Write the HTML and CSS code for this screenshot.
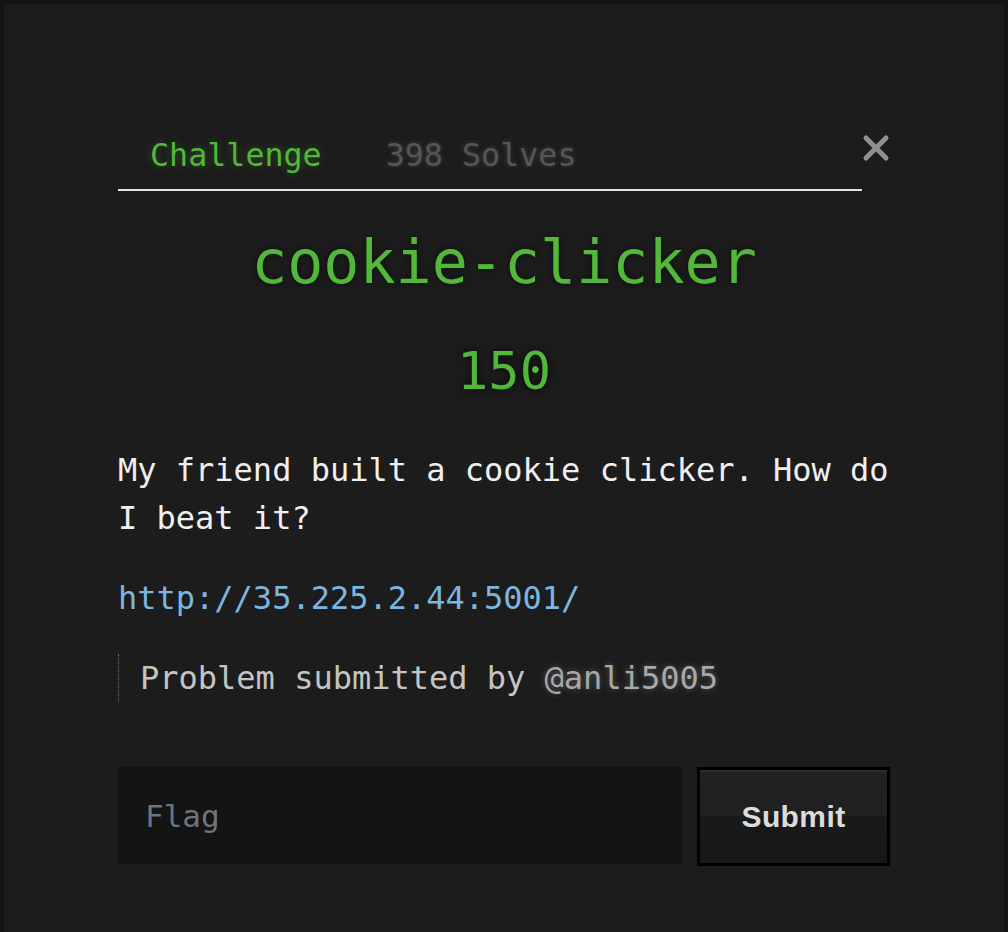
FILE: index.html
```html
<!DOCTYPE html>
<html lang="en">
<head>
  <meta charset="UTF-8" />
  <meta name="viewport" content="width=device-width, initial-scale=1.0" />
  <title>cookie-clicker</title>
  <link rel="stylesheet" href="styles.css">
</head>
<body>
  <div class="modal">
    <div class="modal-head">
      <nav class="tabs">
        <a class="tab active">Challenge</a>
        <a class="tab">398 Solves</a>
      </nav>
      <button class="close" aria-label="Close">
        <svg width="28" height="28" viewBox="0 0 28 28">
          <path d="M4 4 L24 24 M24 4 L4 24" stroke="#8f8f8f" stroke-width="5" stroke-linecap="round" fill="none"/>
        </svg>
      </button>
    </div>

    <h1 class="chal-name">cookie-clicker</h1>
    <h2 class="chal-value">150</h2>

    <div class="chal-desc">
      <p>My friend built a cookie clicker. How do I beat it?</p>
      <p><a class="link" href="#">http://35.225.2.44:5001/</a></p>
      <blockquote>Problem submitted by <span class="author">@anli5005</span></blockquote>
    </div>

    <form class="flag-form" onsubmit="return false;">
      <input class="flag-input" type="text" placeholder="Flag">
      <button class="submit" type="submit">Submit</button>
    </form>
  </div>
</body>
</html>
```

FILE: styles.css
```css
* { box-sizing: border-box; }
body {
  margin: 0;
  background: #151515;
  font-family: "DejaVu Sans Mono", monospace;
  color: #efefef;
}
.modal {
  min-height: 932px;
  width: 1008px;
  border: 4px solid #141414;
  border-bottom: none;
  background: #1c1c1c;
  padding: 127px 114px 0;
}
.modal-head {
  display: flex;
  align-items: flex-start;
}
.tabs {
  flex: 1;
  display: flex;
  border-bottom: 2px solid #e2e2e2;
  padding-bottom: 10px;
}
.tab {
  font-size: 31.7px;
  line-height: 48px;
  padding: 0 32px;
  color: #555;
  text-shadow: 0 0 5px rgba(110, 110, 110, 0.45);
  cursor: pointer;
}
.tab.active {
  color: #52b83a;
  text-shadow: 0 0 8px rgba(82, 184, 58, 0.35);
}
.close {
  background: none;
  border: none;
  padding: 0;
  margin-top: 3px;
  width: 28px;
  height: 28px;
  cursor: pointer;
}
.close svg { display: block; }
.chal-name {
  margin: 35px 0 0;
  text-align: center;
  font-size: 60px;
  line-height: 72px;
  font-weight: normal;
  color: #52b83a;
  text-shadow: 0 0 6px rgba(0, 0, 0, 0.6);
}
.chal-value {
  margin: 42px 0 0;
  text-align: center;
  font-size: 52px;
  line-height: 62px;
  font-weight: normal;
  color: #52b83a;
  text-shadow: 0 0 8px rgba(0, 0, 0, 0.8);
}
.chal-desc {
  margin-top: 44px;
  font-size: 32px;
  line-height: 48px;
}
.chal-desc p {
  margin: 0 0 32px;
}
.link {
  color: #7bb6de;
  text-decoration: none;
}
blockquote {
  margin: 0;
  padding-left: 21px;
  border-left: 1px dotted #6a6a6a;
  color: #c4c4c4;
}
.author {
  color: #a8a8a8;
  text-shadow: 0 0 6px rgba(200, 200, 200, 0.35);
}
.flag-form {
  display: flex;
  gap: 15px;
  margin-top: 65px;
}
.flag-input {
  flex: 1;
  height: 97px;
  background: #141414;
  border: none;
  padding: 0 27px;
  font-family: "DejaVu Sans Mono", monospace;
  font-size: 31px;
  color: #ddd;
}
.flag-input::placeholder { color: #6c757d; }
.submit {
  width: 193px;
  height: 99px;
  border: 3px solid #000;
  background: linear-gradient(#222222 0%, #202020 50%, #191919 50%, #171717 100%);
  box-shadow: inset 0 2px 0 #2e2e2e;
  color: #dcdcdc;
  font-family: "Liberation Sans", Arial, sans-serif;
  font-weight: bold;
  font-size: 30px;
  letter-spacing: 0.4px;
  padding-top: 2px;
  cursor: pointer;
}
```
